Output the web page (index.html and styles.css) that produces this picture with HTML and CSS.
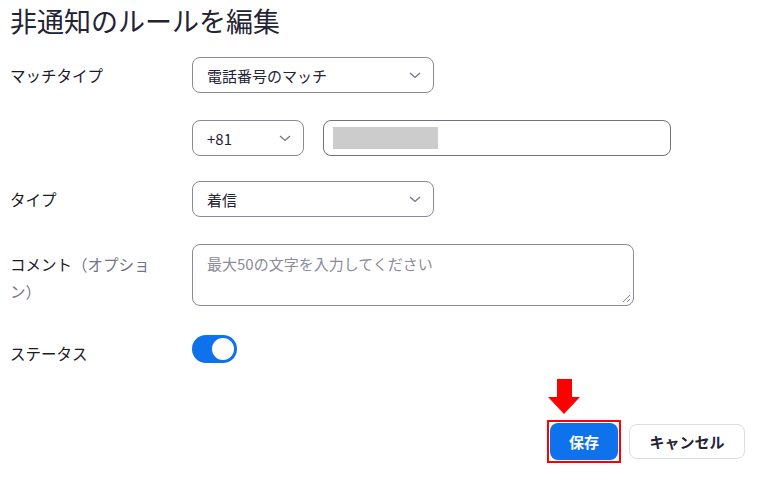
FILE: index.html
```html
<!DOCTYPE html>
<html lang="ja">
<head>
<meta charset="utf-8">
<link rel="stylesheet" href="styles.css">
</head>
<body>
<div class="page">
  <h1 class="title">非通知のルールを編集</h1>
  <div class="form">
    <div class="row r1">
      <div class="label">マッチタイプ</div>
      <div class="select wide"><span>電話番号のマッチ</span><svg class="chev" width="12" height="7" viewBox="0 0 12 7"><polyline points="1,1 6,5.5 11,1" fill="none" stroke="#747487" stroke-width="1.3"/></svg></div>
    </div>
    <div class="row r2">
      <div class="label"></div>
      <div class="select cc"><span>+81</span><svg class="chev" width="12" height="7" viewBox="0 0 12 7"><polyline points="1,1 6,5.5 11,1" fill="none" stroke="#747487" stroke-width="1.3"/></svg></div>
      <div class="phone"><span class="mask"></span></div>
    </div>
    <div class="row r3">
      <div class="label">タイプ</div>
      <div class="select wide"><span>着信</span><svg class="chev" width="12" height="7" viewBox="0 0 12 7"><polyline points="1,1 6,5.5 11,1" fill="none" stroke="#747487" stroke-width="1.3"/></svg></div>
    </div>
    <div class="row r4">
      <div class="label top">コメント<span class="opt">（オプション）</span></div>
      <div class="textarea"><span class="ph">最大50の文字を入力してください</span>
        <svg class="grip" width="9" height="9" viewBox="0 0 9 9"><line x1="8" y1="1" x2="1" y2="8" stroke="#888" stroke-width="1"/><line x1="8" y1="5" x2="5" y2="8" stroke="#888" stroke-width="1"/></svg>
      </div>
    </div>
    <div class="row r5">
      <div class="label status">ステータス</div>
      <div class="toggle"><span class="knob"></span></div>
    </div>
  </div>
  <div class="actions">
    <span class="highlight">
      <svg class="arrow" width="32" height="35" viewBox="0 0 32 35"><rect x="9" y="0" width="15" height="19" fill="#f00"/><polygon points="0,18 32,18 16,35" fill="#f00"/></svg>
      <button class="btn save">保存</button>
    </span>
    <button class="btn cancel">キャンセル</button>
  </div>
</div>
</body>
</html>
```
FILE: styles.css
```css
* { box-sizing: border-box; }
html, body { margin: 0; padding: 0; background: #fff; }
body {
  font-family: "Noto Sans CJK JP", "Noto Sans", "Liberation Sans", sans-serif;
  color: #232333;
  width: 762px;
  height: 480px;
  overflow: hidden;
}
.page { padding: 0 17px 0 10px; }
.title {
  margin: 0;
  font-size: 27px;
  font-weight: 400;
  line-height: 42px;
  height: 42px;
  color: #232333;
}
.form { margin-top: 15px; }
.row { display: flex; align-items: center; }
.r1 { height: 36px; }
.r2 { height: 36px; margin-top: 27px; }
.r3 { height: 36px; margin-top: 25px; }
.r4 { height: 62px; margin-top: 27px; align-items: flex-start; }
.r5 { height: 36px; margin-top: 29px; align-items: flex-start; }
.label {
  width: 182px;
  flex: none;
  font-size: 15.5px;
  font-weight: 400;
  line-height: 27px;
  padding-right: 30px;
  color: #1a1a26;
}
.label .opt { color: #747487; }
.label.top { padding-top: 7px; }
.label.status { padding-top: 5px; }
.select {
  height: 36px;
  border: 1px solid #8a8a99;
  border-radius: 8px;
  display: flex;
  align-items: center;
  justify-content: space-between;
  padding: 0 12px 0 14px;
  font-size: 15px;
}
.select.wide { width: 242px; }
.select.cc { width: 112px; }
.chev { flex: none; }
.phone {
  margin-left: 19px;
  width: 348px;
  height: 36px;
  border: 1.5px solid #6e7180;
  border-radius: 8px;
  padding: 5.5px 9px;
}
.mask { display: block; width: 105px; height: 22px; background: #cccccc; }
.textarea {
  position: relative;
  width: 442px;
  height: 62px;
  border: 1px solid #8a8a99;
  border-radius: 8px;
  padding: 7px 14px;
  font-size: 15px;
  line-height: 24px;
}
.ph { color: #8c8c99; }
.grip { position: absolute; right: 2px; bottom: 2px; }
.toggle {
  width: 45px;
  height: 28px;
  border-radius: 14px;
  background: #0e72ed;
  display: flex;
  align-items: center;
  justify-content: flex-end;
  padding-right: 3px;
}
.knob { width: 22px; height: 22px; border-radius: 50%; background: #fff; }
.actions {
  margin-top: 49px;
  display: flex;
  justify-content: flex-end;
  align-items: center;
  gap: 8px;
}
.highlight {
  position: relative;
  display: flex;
  border: 2px solid #f00;
  padding: 1px;
}
.arrow { position: absolute; left: -1px; top: -43px; }
.btn {
  font-family: inherit;
  font-weight: 700;
  font-size: 15px;
  border-radius: 8px;
  cursor: pointer;
}
.save {
  width: 68px;
  height: 37px;
  background: #0e72ed;
  color: #fff;
  border: none;
}
.cancel {
  width: 116px;
  height: 35px;
  background: #fff;
  color: #232333;
  border: 1px solid #dcdce4;
}
```
